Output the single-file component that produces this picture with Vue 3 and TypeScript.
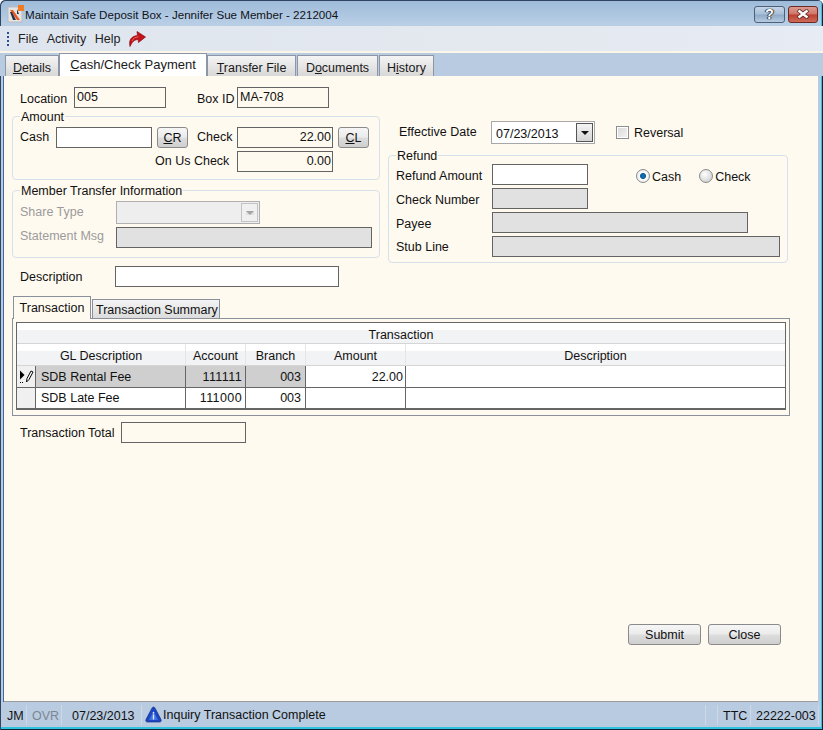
<script setup lang="ts">
const tabs = [
  { key: 'D', rest: 'etails', pre: '', cls: 'details' },
  { key: 'C', rest: 'ash/Check Payment', pre: '', cls: 'active' },
  { key: 'T', rest: 'ransfer File', pre: '', cls: 'transfer' },
  { key: 'o', rest: 'cuments', pre: 'D', cls: 'documents' },
  { key: 'i', rest: 'story', pre: 'H', cls: 'history' },
]
const rows = [
  { gl: 'SDB Rental Fee', account: '111111', branch: '003', amount: '22.00', current: true },
  { gl: 'SDB Late Fee', account: '111000', branch: '003', amount: '', current: false },
]
</script>

<template>
  <div class="win">
    <header class="titlebar">
      <svg class="appicon" width="18" height="18" viewBox="0 0 18 18">
        <rect x="1" y="2" width="14" height="15" fill="#e4e4e4" stroke="#bbb" />
        <rect x="11" y="0" width="6" height="6" fill="#f47a20" />
        <path d="M3 5 L6 5 L13 15 L10 15 Z" fill="#e8581c" />
        <path d="M3 7 L5 7 L9 15 L6 15 Z" fill="#27304a" />
        <path d="M10 4 L12 9 L10 9 Z" fill="#27304a" />
      </svg>
      <span class="title">Maintain Safe Deposit Box - Jennifer Sue Member - 2212004</span>
      <button class="capbtn help">?</button>
      <button class="capbtn close">
        <svg width="14" height="10" viewBox="0 0 14 10">
          <path d="M2 1 L12 9 M12 1 L2 9" stroke="#5a2a22" stroke-width="4" />
          <path d="M2.5 1.5 L11.5 8.5 M11.5 1.5 L2.5 8.5" stroke="#fff" stroke-width="2.4" />
        </svg>
      </button>
    </header>

    <nav class="menubar">
      <span class="grip"><i></i><i></i><i></i><i></i></span>
      <span class="mi">File</span>
      <span class="mi">Activity</span>
      <span class="mi">Help</span>
      <svg class="redo" width="17" height="17" viewBox="0 0 17 17">
        <path d="M1 16.5 C-0.5 10 2.5 6 8.5 5.5 L8 1.5 L16.5 7 L9.5 12.5 L9.2 9.5 C5.5 9.5 3 12 1 16.5 Z" fill="#c2121a" stroke="#8a0c10" stroke-width="0.7" />
        <path d="M3 11 C4 8.5 6 7 9.5 6.8" stroke="#ee6a60" stroke-width="1" fill="none" />
      </svg>
    </nav>

    <div class="tabstrip">
      <div v-for="t in tabs" :key="t.cls" class="tab" :class="t.cls">{{ t.pre }}<u>{{ t.key }}</u>{{ t.rest }}</div>
    </div>

    <main class="content">
      <div class="top">
        <section class="left">
          <div class="row idrow">
            <span class="lbl w54 down1">Location</span>
            <div class="fld w92 ro">005</div>
            <span class="lbl boxid down1">Box ID</span>
            <div class="fld w92 ro">MA-708</div>
          </div>

          <div class="group amount">
            <span class="legend">Amount</span>
            <div class="row">
              <span class="lbl w36 up1">Cash</span>
              <div class="fld w96 white"></div>
              <button class="btn small"><u>C</u>R</button>
              <span class="lbl check up1">Check</span>
              <div class="fld w96 ro right">22.00</div>
              <button class="btn small"><u>C</u>L</button>
            </div>
            <div class="row onus">
              <span class="lbl onuslbl up1">On Us Check</span>
              <div class="fld w96 ro right">0.00</div>
            </div>
          </div>

          <div class="group member">
            <span class="legend">Member Transfer Information</span>
            <div class="row">
              <span class="lbl dim w96 up1">Share Type</span>
              <div class="combo">
                <span class="combobtn"><i class="arrow grey"></i></span>
              </div>
            </div>
            <div class="row stmt">
              <span class="lbl dim w96 up2">Statement Msg</span>
              <div class="fld w256 grey"></div>
            </div>
          </div>

          <div class="row descrow">
            <span class="lbl w95">Description</span>
            <div class="fld w224 white"></div>
          </div>
        </section>

        <section class="rightcol">
          <div class="row effrow">
            <span class="lbl w92 up1">Effective Date</span>
            <div class="datebox">
              <span class="dateval">07/23/2013</span>
              <span class="datebtn"><i class="arrow"></i></span>
            </div>
            <span class="checkbox"></span>
            <span class="lbl">Reversal</span>
          </div>

          <div class="group refund">
            <span class="legend">Refund</span>
            <div class="row">
              <span class="lbl w96 down1">Refund Amount</span>
              <div class="fld w96 white"></div>
              <span class="radio on"></span><span class="lbl radiolbl">Cash</span>
              <span class="radio second"></span><span class="lbl radiolbl lastlbl">Check</span>
            </div>
            <div class="row tight">
              <span class="lbl w96 down1">Check Number</span>
              <div class="fld w96 grey"></div>
            </div>
            <div class="row tight">
              <span class="lbl w96 down1">Payee</span>
              <div class="fld w256 grey"></div>
            </div>
            <div class="row tight">
              <span class="lbl w96">Stub Line</span>
              <div class="fld w288 grey"></div>
            </div>
          </div>
        </section>
      </div>

      <div class="subtabs">
        <div class="subtab on">Transaction</div>
        <div class="subtab">Transaction Summary</div>
      </div>
      <div class="panel">
        <div class="grid">
          <div class="gtitle">Transaction</div>
          <div class="gh merged">GL Description</div>
          <div class="gh">Account</div>
          <div class="gh">Branch</div>
          <div class="gh">Amount</div>
          <div class="gh lasth">Description</div>
          <template v-for="r in rows" :key="r.gl">
            <div class="gc rh">
              <svg v-if="r.current" width="16" height="15" viewBox="0 0 16 15">
                <path d="M1 1.5 L1 10.5 L5.5 6 Z" fill="#000" />
                <path d="M7.5 13 L8 9.5 L12 2 L14 3 L10 10.5 Z" fill="#fff" stroke="#000" stroke-width="1" />
                <path d="M1 13.5 H2 M3 13.5 H4" stroke="#000" stroke-width="1" />
              </svg>
            </div>
            <div class="gc" :class="{ sel: r.current, first: r.current }">{{ r.gl }}</div>
            <div class="gc num acc" :class="{ sel: r.current, first: r.current }">{{ r.account }}</div>
            <div class="gc num br" :class="{ sel: r.current, first: r.current }">{{ r.branch }}</div>
            <div class="gc num amt" :class="{ first: r.current }">{{ r.amount }}</div>
            <div class="gc last"></div>
          </template>
        </div>
      </div>

      <div class="row totalrow">
        <span class="lbl w101">Transaction Total</span>
        <div class="fld w125 ro"></div>
      </div>

      <div class="actions">
        <button class="btn wide">Submit</button>
        <button class="btn wide">Close</button>
      </div>
    </main>

    <footer class="status">
      <span class="cell jm">JM</span>
      <span class="cell ovr">OVR</span>
      <span class="cell sdate">07/23/2013</span>
      <span class="cell msg">
        <svg width="17" height="17" viewBox="0 0 17 17">
          <path d="M8.5 1 C9.5 1 10 2 10.5 3 L16 13.5 C16.6 15 16 16 14.5 16 L2.5 16 C1 16 0.4 15 1 13.5 L6.5 3 C7 2 7.5 1 8.5 1 Z" fill="#1d45c0" stroke="#17308c" stroke-width="0.7" />
          <path d="M8.5 5 L13 14 L4 14 Z" fill="#3f70e0" />
          <rect x="7.8" y="8.5" width="1.4" height="5" fill="#dfe9ff" />
          <rect x="7.8" y="6" width="1.4" height="1.5" fill="#dfe9ff" />
        </svg>
        <span>Inquiry Transaction Complete</span>
      </span>
      <span class="cell blank"></span>
      <span class="cell spacer"></span>
      <span class="cell ttc">TTC</span>
      <span class="cell acct">22222-003</span>
    </footer>
  </div>
</template>

<style scoped>
* { box-sizing: border-box; }
.win {
  width: 823px;
  height: 730px;
  display: flex;
  flex-direction: column;
  padding: 0 5px 3px 4px;
  background: #b9cbe0;
  background-image: linear-gradient(#9dbad8 0, #b9cfe6 25px, #b9cbe0 26px);
  box-shadow:
    inset 1px 1px 0 #2f4560,
    inset -1px -1px 0 #12243a,
    inset -2px -3px 0 #2ec4e0;
  border-radius: 5px 5px 0 0;
  font-family: "Liberation Sans", Arial, sans-serif;
  font-size: 12.5px;
  color: #111;
  overflow: hidden;
}
.titlebar {
  height: 26px;
  margin: 0 -5px 0 -4px;
  padding: 0 5px 0 7px;
  display: flex;
  align-items: center;
  flex: none;
}
.appicon { flex: none; margin-top: 2px; }
.title { font-size: 11.6px; flex: 1; color: #10131a; margin-top: 2px; }
.capbtn {
  height: 17px;
  padding: 0;
  margin-top: 2px;
  border: 1px solid #4e5f78;
  border-radius: 3px;
  display: flex;
  align-items: center;
  justify-content: center;
  font-family: "Liberation Sans", sans-serif;
}
.help {
  width: 31px;
  background: linear-gradient(#c4d4e6 0, #a8c0da 48%, #8fa9c6 52%, #b4cbe2 100%);
  color: #fff;
  font-weight: 700;
  font-size: 14px;
  text-shadow: 0 0 1px #222, 1px 0 1px #333, -1px 0 1px #333;
}
.close {
  width: 30px;
  margin-left: 3px;
  border-color: #6a2a24;
  background: linear-gradient(#dc9a90 0, #cf7568 48%, #bb3f30 52%, #cf6a58 100%);
}
.menubar {
  height: 25px;
  margin: 0 -5px 0 -4px;
  padding-left: 7px;
  flex: none;
  display: flex;
  align-items: center;
  background: linear-gradient(90deg, #dfe5ee, #e4e9f0 60%, #e6ebf4);
}
.grip { display: flex; flex-direction: column; gap: 2px; width: 7px; margin-right: 4px; }
.grip i { width: 2px; height: 2px; background: #2f4f8f; display: block; }
.mi { font-size: 12.5px; margin-right: 8.5px; color: #222; }
.tabstrip {
  height: 25px;
  margin: 0 -5px 0 -4px;
  padding-left: 5px;
  flex: none;
  border-top: 2px solid #fbf6e8;
  background: #b9cbe0;
  display: flex;
  align-items: flex-end;
}
.tab {
  height: 21px;
  padding-top: 5px;
  border: 1px solid #8d96a6;
  border-bottom: 0;
  background: linear-gradient(#f4f4f4, #d8d8d8);
  text-align: center;
  font-size: 12.5px;
  color: #1a1a1a;
  white-space: nowrap;
}
.tab.details { width: 54px; }
.tab.active {
  width: 148px;
  height: 23px;
  padding-top: 3px;
  background: #fff;
  font-size: 13px;
  position: relative;
}
.tab.transfer { width: 89px; }
.tab.documents { width: 81px; margin-left: 1px; }
.tab.history { width: 55px; margin-left: 1px; }
.content {
  flex: 1;
  min-height: 0;
  background: #fffaf0;
  border-bottom: 1px solid #9a9a9a;
  box-shadow: -1px 0 0 #3f6aa8;
  padding: 11px 0 0 8px;
  display: flex;
  flex-direction: column;
}
.top { display: flex; gap: 8px; align-items: flex-start; }
.left { width: 368px; flex: none; }
.rightcol { width: 400px; flex: none; padding-top: 34px; }
.row { display: flex; align-items: center; }
.idrow { padding-left: 8px; }
.lbl { white-space: nowrap; flex: none; color: #111; }
.up1 { margin-bottom: 2px; }
.up2 { margin-bottom: 3px; }
.down1 { margin-top: 2px; }
.dim { color: #9b9b9b; }
.w36 { width: 36px; }
.w54 { width: 54px; }
.w92 { width: 92px; }
.w95 { width: 95px; }
.w96 { width: 96px; }
.w101 { width: 101px; }
.w125 { width: 125px; }
.w224 { width: 224px; }
.w256 { width: 256px; }
.w288 { width: 288px; }
.boxid { margin-left: 31px; width: 40px; }
.fld {
  height: 21px;
  flex: none;
  border: 1px solid #646464;
  padding: 1px 2px 0;
  line-height: 17px;
  font-size: 12.5px;
}
.ro { background: #fffaf0; }
.white { background: #fff; }
.grey { background: #e1e1e1; }
.right { text-align: right; padding-right: 1px; }
.group {
  position: relative;
  border: 1px solid #d6e0ea;
  border-radius: 4px;
  padding-left: 7px;
}
.legend {
  position: absolute;
  top: -7px;
  left: 7px;
  padding: 0 1px;
  background: #fffaf0;
  line-height: 15px;
}
.amount { height: 64px; margin-top: 8px; padding-top: 10px; }
.check { margin-left: 9px; width: 40px; }
.btn {
  font-family: "Liberation Sans", Arial, sans-serif;
  font-size: 12.5px;
  color: #111;
  padding: 0;
  border: 1px solid #8a8a8a;
  border-radius: 3px;
  background: linear-gradient(#f6f6f6 0, #ececec 45%, #dcdcdc 55%, #cfcfcf 100%);
  height: 21px;
  flex: none;
}
.small { width: 31px; margin-left: 5px; }
.onus { margin-top: 3px; padding-left: 135px; }
.onuslbl { width: 82px; }
.member { height: 68px; margin-top: 10px; padding-top: 10px; }
.combo {
  position: relative;
  width: 144px;
  height: 23px;
  flex: none;
  border: 1px solid #b0b0b0;
  background: #eeeeee;
}
.combobtn {
  position: absolute;
  right: 1px;
  top: 1px;
  bottom: 1px;
  width: 17px;
  border: 1px solid #c4c4c4;
  background: #f0f0f0;
  display: flex;
  align-items: center;
  justify-content: center;
}
.arrow {
  width: 0;
  height: 0;
  border-left: 4px solid transparent;
  border-right: 4px solid transparent;
  border-top: 4px solid #111;
}
.arrow.grey { border-top-color: #a5a5a5; }
.stmt { margin-top: 3px; }
.descrow { margin-top: 8px; padding-left: 8px; }
.effrow { padding-left: 11px; height: 23px; }
.datebox {
  position: relative;
  width: 104px;
  height: 23px;
  flex: none;
  border: 1px solid #a8a8a8;
  background: #fff;
  padding: 3px 0 0 4px;
  line-height: 18px;
}
.datebtn {
  position: absolute;
  right: 1px;
  top: 1px;
  bottom: 1px;
  width: 17px;
  border: 1px solid #555;
  background: linear-gradient(#f4f4f4, #d5d5d5);
  display: flex;
  align-items: center;
  justify-content: center;
}
.checkbox {
  width: 13px;
  height: 13px;
  flex: none;
  margin: 0 5px 0 21px;
  border: 1px solid #8e8e8e;
  background: linear-gradient(135deg, #d8d8d8, #f4f4f4);
  box-shadow: inset 0 0 0 1px #fff;
}
.refund { height: 108px; margin-top: 11px; padding-top: 8px; }
.radio {
  width: 14px;
  height: 14px;
  flex: none;
  border-radius: 50%;
  border: 1px solid #8a8a8a;
  background: radial-gradient(circle at 40% 35%, #fff, #c6c6c6);
  margin-left: 48px;
  margin-top: 3px;
}
.radio.on {
  background: radial-gradient(circle, #1476b8 0, #0f5f9a 30%, #fff 42%, #d8d8d8 100%);
}
.radio.second { margin-left: 18px; }
.radiolbl { margin-left: 2px; margin-top: 4px; }
.tight { margin-top: 3px; }
.subtabs { display: flex; align-items: flex-end; margin-top: 9px; padding-left: 1px; height: 22px; flex: none; }
.subtab {
  height: 19px;
  padding: 3px 3px 0;
  width: 128px;
  margin-left: 1px;
  border: 1px solid #8a8f9c;
  border-bottom: 0;
  background: linear-gradient(#f4f4f4, #dcdcdc);
  white-space: nowrap;
  text-align: center;
}
.subtab.on {
  width: 78px;
  height: 23px;
  margin-left: 0;
  background: #fffaf0;
  position: relative;
  top: 1px;
  z-index: 1;
  padding-top: 4px;
}
.panel {
  width: 778px;
  height: 98px;
  flex: none;
  border: 1px solid #8a8f9c;
  padding: 3px 3px 5px;
}
.grid {
  width: 770px;
  height: 88px;
  border: 1px solid #666;
  border-bottom: 2px solid #666;
  background: #fff;
  display: grid;
  grid-template-columns: 19px 150px 60px 60px 100px 1fr;
  grid-template-rows: 21px 22px 22px 20px;
}
.gtitle {
  grid-column: 1 / -1;
  text-align: center;
  line-height: 24px;
  overflow: hidden;
  background: linear-gradient(#fff 0 35%, #f2f3f5 35% 100%);
  border-bottom: 1px solid #d5d5d5;
}
.gh {
  text-align: center;
  line-height: 25px;
  overflow: hidden;
  background: linear-gradient(#fff 0 35%, #f2f3f5 35% 100%);
  border-bottom: 1px solid #d5d5d5;
  border-right: 1px solid #e6e6e6;
}
.merged { grid-column: span 2; }
.lasth { border-right: 0; }
.gc {
  border-right: 1px solid #666;
  border-bottom: 1px solid #666;
  padding: 0 0 0 5px;
  line-height: 20px;
  background: #fff;
  font-size: 12.5px;
}
.gc.first { line-height: 22px; }
.gc:nth-last-child(-n+6) { border-bottom: 0; }
.gc.rh { background: #f0f0f0; padding: 3px 0 0 2px; line-height: 0; }
.gc.sel { background: #cfcfcf; }
.gc.num { text-align: right; padding: 0 2px 0 0; }
.gc.acc { padding-right: 3px; letter-spacing: 0.4px; }
.gc.br { padding-right: 4px; }
.gc.last { border-right: 0; }
.totalrow { margin-top: 6px; padding-left: 8px; }
.actions {
  margin-top: auto;
  padding: 0 37px 56px 0;
  display: flex;
  justify-content: flex-end;
  gap: 7px;
}
.wide { width: 73px; }
.status {
  height: 25px;
  flex: none;
  margin: 0 -5px 0 -4px;
  padding-left: 3px;
  display: flex;
  align-items: center;
}
.cell {
  height: 20px;
  line-height: 22px;
  border-right: 1px solid #cfd9e6;
  white-space: nowrap;
  flex: none;
}
.jm { width: 24px; padding-left: 4px; }
.ovr { width: 35px; padding-left: 5px; color: #7c8794; }
.sdate { width: 80px; padding-left: 10px; }
.msg { width: 0; flex: none; border: 0; padding-left: 3px; display: flex; align-items: center; gap: 1px; }
.msg svg { flex: none; }
.blank { width: 561px; }
.spacer { width: 12px; }
.ttc { width: 33px; padding-left: 5px; }
.acct { width: 68px; padding-left: 5px; }
</style>
